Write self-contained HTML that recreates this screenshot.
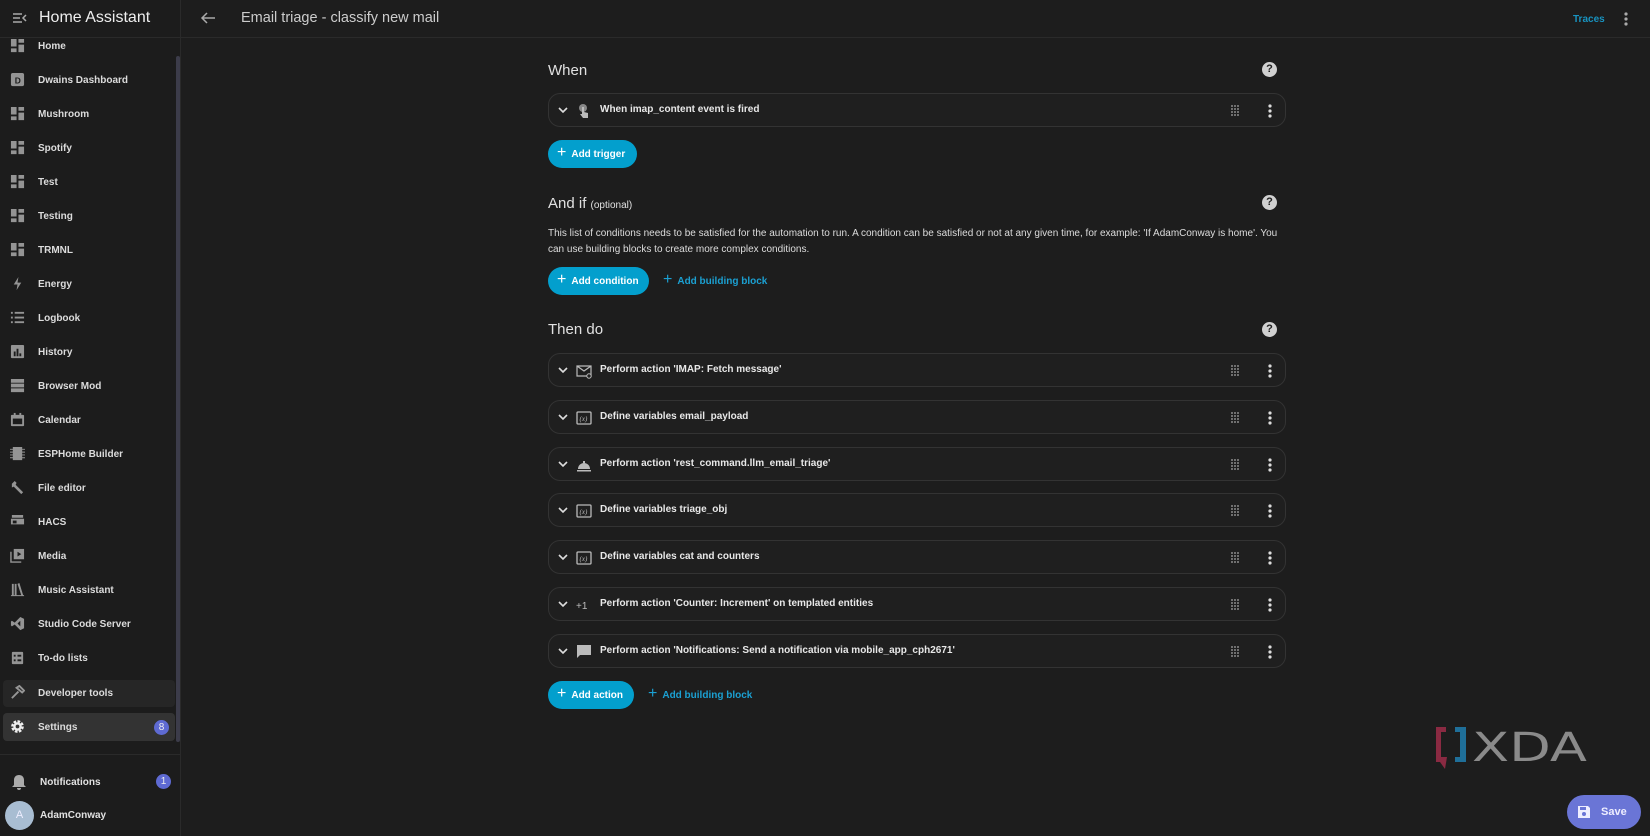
<!DOCTYPE html>
<html><head><meta charset="utf-8"><style>
*{box-sizing:border-box;margin:0;padding:0}
body{width:1650px;height:836px;background:#1d1d1d;font-family:"Liberation Sans",sans-serif;color:#e1e1e1;position:relative;overflow:hidden}
.a{position:absolute}
.side{left:0;top:0;width:181px;height:836px;background:#1c1c1c;border-right:1px solid #2a2a2a}
.hdr{left:0;top:0;width:1650px;height:38px;border-bottom:1px solid #2a2a2a}
.item{position:absolute;left:0;width:176px;height:28px;display:flex;align-items:center;font-size:10px;font-weight:bold;color:#dcdcdc}
.item .ic{position:absolute;left:10px;top:6px;width:15px;height:15px;opacity:.85}
.item span{position:absolute;left:38px}
.sec{font-size:15px;color:#e1e1e1}
.help{width:15px;height:15px;border-radius:50%;background:#d0d0d0;color:#1d1d1d;font-size:11px;font-weight:bold;text-align:center;line-height:15px}
.card{left:548px;width:738px;height:34px;border:1px solid #333;border-radius:12px;background:#1f1f1f}
.card .chev{position:absolute;left:9px;top:11px}
.card .ci{position:absolute;left:27px;top:9px;width:16px;height:16px}
.card .t{position:absolute;left:51px;top:10px;font-size:10px;font-weight:bold;color:#e8e8e8;white-space:nowrap}
.card .drag{position:absolute;right:44px;top:11px}
.card .dots{position:absolute;right:12px;top:9px}
.btn{height:28px;border-radius:14px;background:#039fcd;color:#fff;font-size:10px;font-weight:bold;display:flex;align-items:center;padding-left:9px;white-space:nowrap}
.btn b{font-size:16px;font-weight:normal;margin-right:5px;margin-top:-2px}
.lnk{color:#1ba0d2;font-size:10px;font-weight:bold;display:flex;align-items:center}
.lnk b{font-size:16px;font-weight:normal;margin-right:5px;margin-top:-2px}
</style></head><body>
<div class="a side"></div>
<div class="a hdr"></div>
<svg class="a" style="left:12px;top:11px" width="16" height="14" viewBox="0 0 16 14"><path d="M1 3h9M1 7h7M1 11h9M14 4l-3 3 3 3" stroke="#aaa" stroke-width="1.5" fill="none"/></svg>
<div class="a" style="left:39px;top:9px;font-size:16px;color:#eee">Home Assistant</div>
<svg class="a" style="left:200px;top:11px" width="16" height="14" viewBox="0 0 16 14"><path d="M15 7H2M7 2L2 7l5 5" stroke="#aaa" stroke-width="1.5" fill="none"/></svg>
<div class="a" style="left:241px;top:10px;font-size:14.5px;color:#ccc">Email triage - classify new mail</div>
<div class="a" style="left:1573px;top:14px;font-size:10px;font-weight:bold;color:#1893c0">Traces</div>
<svg class="a" style="left:1623px;top:11px" width="6" height="16"><circle cx="3" cy="3" r="1.6" fill="#aaa"/><circle cx="3" cy="8" r="1.6" fill="#aaa"/><circle cx="3" cy="13" r="1.6" fill="#aaa"/></svg>
<div class="a" style="left:176px;top:56px;width:4px;height:686px;background:#3c3c4a;border-radius:2px"></div>
<div class="a" style="left:3px;top:680px;width:172px;height:27px;background:#262626;border-radius:4px"></div>
<div class="a" style="left:3px;top:713px;width:172px;height:28px;background:#333;border-radius:4px"></div>
<div class="item" style="top:32px"><svg class="ic" viewBox="0 0 16 16"><path d="M1 1h6v8H1zM9 1h6v4H9zM9 7h6v8H9zM1 11h6v4H1z" fill="#aaa"/></svg><span>Home</span></div>
<div class="item" style="top:66px"><svg class="ic" viewBox="0 0 16 16"><rect x="1" y="1" width="14" height="14" rx="2" fill="#aaa"/><text x="5" y="12" font-size="9" font-family="Liberation Sans" font-weight="bold" fill="#1c1c1c">D</text></svg><span>Dwains Dashboard</span></div>
<div class="item" style="top:100px"><svg class="ic" viewBox="0 0 16 16"><path d="M1 1h6v8H1zM9 1h6v4H9zM9 7h6v8H9zM1 11h6v4H1z" fill="#aaa"/></svg><span>Mushroom</span></div>
<div class="item" style="top:134px"><svg class="ic" viewBox="0 0 16 16"><path d="M1 1h6v8H1zM9 1h6v4H9zM9 7h6v8H9zM1 11h6v4H1z" fill="#aaa"/></svg><span>Spotify</span></div>
<div class="item" style="top:168px"><svg class="ic" viewBox="0 0 16 16"><path d="M1 1h6v8H1zM9 1h6v4H9zM9 7h6v8H9zM1 11h6v4H1z" fill="#aaa"/></svg><span>Test</span></div>
<div class="item" style="top:202px"><svg class="ic" viewBox="0 0 16 16"><path d="M1 1h6v8H1zM9 1h6v4H9zM9 7h6v8H9zM1 11h6v4H1z" fill="#aaa"/></svg><span>Testing</span></div>
<div class="item" style="top:236px"><svg class="ic" viewBox="0 0 16 16"><path d="M1 1h6v8H1zM9 1h6v4H9zM9 7h6v8H9zM1 11h6v4H1z" fill="#aaa"/></svg><span>TRMNL</span></div>
<div class="item" style="top:270px"><svg class="ic" viewBox="0 0 16 16"><path d="M9 1L4 9h4l-1 6 5-8H8z" fill="#aaa"/></svg><span>Energy</span></div>
<div class="item" style="top:304px"><svg class="ic" viewBox="0 0 16 16"><path d="M1 2h2v2H1zM5 2h10v2H5zM1 7h2v2H1zM5 7h10v2H5zM1 12h2v2H1zM5 12h10v2H5z" fill="#aaa"/></svg><span>Logbook</span></div>
<div class="item" style="top:338px"><svg class="ic" viewBox="0 0 16 16"><rect x="1" y="1" width="14" height="14" rx="1" fill="#aaa"/><path d="M4 8h2v5H4zM7 5h2v8H7zM10 10h2v3h-2z" fill="#1c1c1c"/></svg><span>History</span></div>
<div class="item" style="top:372px"><svg class="ic" viewBox="0 0 16 16"><path d="M1 1h14v4H1zM1 6h14v4H1zM1 11h14v4H1z" fill="#aaa"/></svg><span>Browser Mod</span></div>
<div class="item" style="top:406px"><svg class="ic" viewBox="0 0 16 16"><rect x="1" y="3" width="14" height="12" rx="1" fill="#aaa"/><rect x="3" y="7" width="10" height="6" fill="#1c1c1c"/><rect x="4" y="1" width="2" height="3" fill="#aaa"/><rect x="10" y="1" width="2" height="3" fill="#aaa"/></svg><span>Calendar</span></div>
<div class="item" style="top:440px"><svg class="ic" viewBox="0 0 16 16"><path d="M3 1h10v14H3z M0 3h3v1H0zM0 6h3v1H0zM0 9h3v1H0zM0 12h3v1H0zM13 3h3v1h-3zM13 6h3v1h-3zM13 9h3v1h-3zM13 12h3v1h-3z" fill="#aaa"/></svg><span>ESPHome Builder</span></div>
<div class="item" style="top:474px"><svg class="ic" viewBox="0 0 16 16"><path d="M2 4l3-3 2 2-1 2 8 8-2 2-8-8-2 1z" fill="#aaa"/></svg><span>File editor</span></div>
<div class="item" style="top:508px"><svg class="ic" viewBox="0 0 16 16"><path d="M2 1h12v3H2zM1 5h14v6H1z" fill="#aaa"/><rect x="3" y="7" width="4" height="3" fill="#1c1c1c"/></svg><span>HACS</span></div>
<div class="item" style="top:542px"><svg class="ic" viewBox="0 0 16 16"><path d="M1 4v11h11" stroke="#aaa" stroke-width="1.5" fill="none"/><rect x="4" y="1" width="11" height="11" fill="#aaa"/><path d="M8 4v5l4-2.5z" fill="#1c1c1c"/></svg><span>Media</span></div>
<div class="item" style="top:576px"><svg class="ic" viewBox="0 0 16 16"><path d="M2 2h2v12H2zM5 2h2v12H5zM8 2l2-1 4 13h-2z M1 14h14v1H1z" fill="#aaa"/></svg><span>Music Assistant</span></div>
<div class="item" style="top:610px"><svg class="ic" viewBox="0 0 16 16"><path d="M11 1l4 2v10l-4 2-6-6-3 2-1-1V6l1-1 3 2zM11 5l-3 3 3 3z" fill="#aaa"/></svg><span>Studio Code Server</span></div>
<div class="item" style="top:644px"><svg class="ic" viewBox="0 0 16 16"><rect x="2" y="2" width="12" height="13" rx="1" fill="#aaa"/><path d="M4 5h2v2H4zM8 5h4v2H8zM4 10h2v2H4zM8 10h4v2H8z" fill="#1c1c1c"/></svg><span>To-do lists</span></div>
<div class="item" style="top:679px"><svg class="ic" viewBox="0 0 16 16"><path d="M2 14l7-7M7 3l3-2 5 5-2 2z" stroke="#aaa" stroke-width="2" fill="none"/></svg><span>Developer tools</span></div>
<div class="item" style="top:713px"><svg class="ic" viewBox="0 0 16 16" style="opacity:1"><circle cx="8" cy="8" r="5" fill="none" stroke="#eee" stroke-width="3.5" stroke-dasharray="2.6 1.3"/><circle cx="8" cy="8" r="4.5" fill="#eee"/><circle cx="8" cy="8" r="2" fill="#333"/></svg><span>Settings</span></div>
<div class="a" style="left:154px;top:720px;width:15px;height:15px;border-radius:50%;background:#5e6ad2;color:#eee;font-size:10px;text-align:center;line-height:15px">8</div>
<div class="a" style="left:0;top:754px;width:180px;height:1px;background:#2a2a2a"></div>
<svg class="a" style="left:11px;top:774px" width="16" height="17" viewBox="0 0 16 17"><path d="M8 1c-3 0-5 2-5 5v5l-2 2h14l-2-2V6c0-3-2-5-5-5zM6 14h4a2 2 0 0 1-4 0z" fill="#aaa"/></svg>
<div class="a" style="left:40px;top:777px;font-size:10px;font-weight:bold">Notifications</div>
<div class="a" style="left:156px;top:774px;width:15px;height:15px;border-radius:50%;background:#5e6ad2;color:#eee;font-size:10px;text-align:center;line-height:15px">1</div>
<div class="a" style="left:5px;top:801px;width:29px;height:29px;border-radius:50%;background:#a8bdd2;color:#eef;font-size:11px;text-align:center;line-height:29px">A</div>
<div class="a" style="left:40px;top:810px;font-size:10px;font-weight:bold">AdamConway</div>

<div class="a sec" style="left:548px;top:62px">When</div>
<div class="a help" style="left:1262px;top:62px">?</div>
<div class="a card" style="top:93px"><svg class="chev" width="10" height="10" viewBox="0 0 10 10"><path d="M1 3l4 4 4-4" stroke="#ddd" stroke-width="1.6" fill="none"/></svg><svg class="ci" viewBox="0 0 16 16"><circle cx="7" cy="5" r="4" fill="#888"/><path d="M6 4h2v5l4 1v5H7l-3-4 2 0z" fill="#bbb"/></svg><div class="t">When imap_content event is fired</div><svg class="drag" width="10" height="12"><g fill="#aaa"><circle cx="1" cy="1" r=".9"/><circle cx="4" cy="1" r=".9"/><circle cx="7" cy="1" r=".9"/><circle cx="1" cy="4" r=".9"/><circle cx="4" cy="4" r=".9"/><circle cx="7" cy="4" r=".9"/><circle cx="1" cy="7" r=".9"/><circle cx="4" cy="7" r=".9"/><circle cx="7" cy="7" r=".9"/><circle cx="1" cy="10" r=".9"/><circle cx="4" cy="10" r=".9"/><circle cx="7" cy="10" r=".9"/></g></svg><svg class="dots" width="6" height="16"><circle cx="3" cy="3" r="1.6" fill="#ddd"/><circle cx="3" cy="8" r="1.6" fill="#ddd"/><circle cx="3" cy="13" r="1.6" fill="#ddd"/></svg></div>
<div class="a btn" style="left:548px;top:140px;width:89px"><b>+</b>Add trigger</div>

<div class="a sec" style="left:548px;top:195px">And if <span style="font-size:10px">(optional)</span></div>
<div class="a help" style="left:1262px;top:195px">?</div>
<div class="a" style="left:548px;top:226px;width:740px;font-size:10px;line-height:16px;color:#ddd">This list of conditions needs to be satisfied for the automation to run. A condition can be satisfied or not at any given time, for example: 'If AdamConway is home'. You can use building blocks to create more complex conditions.</div>
<div class="a btn" style="left:548px;top:267px;width:101px"><b>+</b>Add condition</div>
<div class="a lnk" style="left:663px;top:267px;height:28px"><b>+</b>Add building block</div>

<div class="a sec" style="left:548px;top:321px">Then do</div>
<div class="a help" style="left:1262px;top:322px">?</div>
<div id="acts"></div>
<div class="a btn" style="left:548px;top:681px;width:86px"><b>+</b>Add action</div>
<div class="a lnk" style="left:648px;top:681px;height:28px"><b>+</b>Add building block</div>

<svg class="a" style="left:1434px;top:725px" width="155" height="46" viewBox="0 0 155 46"><path d="M2 2h10v5H7v25h6l-2 12-5-7H2z" fill="#8a2a42"/><path d="M21 2h11v35H21v-5h5V7h-5z" fill="#1f6f99"/><text x="38" y="36" font-family="DejaVu Sans" font-size="40" fill="#8a8a8a" textLength="115" lengthAdjust="spacingAndGlyphs">XDA</text></svg>
<div class="a" style="left:1567px;top:795px;width:74px;height:34px;border-radius:17px;background:#6a75d6;color:#eef;font-size:11px;font-weight:bold"><svg style="position:absolute;left:10px;top:10px" width="14" height="14" viewBox="0 0 14 14"><path d="M1 1h10l2 2v10H1z" fill="#eef"/><rect x="3" y="2" width="6" height="3" fill="#6a75d6"/><circle cx="7" cy="9" r="2" fill="#6a75d6"/></svg><span style="position:absolute;left:34px;top:11px">Save</span></div>

<script>
var acts=[["mail","Perform action 'IMAP: Fetch message'"],["var","Define variables email_payload"],["bell","Perform action 'rest_command.llm_email_triage'"],["var","Define variables triage_obj"],["var","Define variables cat and counters"],["plus","Perform action 'Counter: Increment' on templated entities"],["msg","Perform action 'Notifications: Send a notification via mobile_app_cph2671'"]];
var icons={mail:'<path d="M1 3h14v10H1z M1 3l7 5 7-5" stroke="#bbb" stroke-width="1.2" fill="none"/><circle cx="13" cy="13" r="2.2" fill="#1f1f1f" stroke="#bbb"/>',
var:'<rect x="1" y="2" width="14" height="12" rx="1" fill="none" stroke="#bbb" stroke-width="1.3"/><text x="3.5" y="11" font-size="7" font-style="italic" fill="#bbb" font-family="Liberation Serif">(x)</text>',
bell:'<path d="M2 12a6 6 0 0 1 12 0zM1 13h14v1.5H1z M7 4h2v2H7z" fill="#bbb"/>',
plus:'<text x="0" y="12" font-size="10" fill="#bbb" font-family="Liberation Sans">+1</text>',
msg:'<path d="M1 1h14v10H4l-3 3z" fill="#bbb"/>'};
var drag='<svg class="drag" width="10" height="12"><g fill="#aaa">';
for(var r=0;r<4;r++)for(var c=0;c<3;c++)drag+='<circle cx="'+(1+c*3)+'" cy="'+(1+r*3)+'" r=".9"/>';
drag+='</g></svg>';
var h='';
acts.forEach(function(a,i){var top=353+i*46.8;
h+='<div class="a card" style="top:'+top+'px"><svg class="chev" width="10" height="10" viewBox="0 0 10 10"><path d="M1 3l4 4 4-4" stroke="#ddd" stroke-width="1.6" fill="none"/></svg><svg class="ci" viewBox="0 0 16 16">'+icons[a[0]]+'</svg><div class="t">'+a[1]+'</div>'+drag+'<svg class="dots" width="6" height="16"><circle cx="3" cy="3" r="1.6" fill="#ddd"/><circle cx="3" cy="8" r="1.6" fill="#ddd"/><circle cx="3" cy="13" r="1.6" fill="#ddd"/></svg></div>';});
document.getElementById('acts').innerHTML=h;
</script>
</body></html>
